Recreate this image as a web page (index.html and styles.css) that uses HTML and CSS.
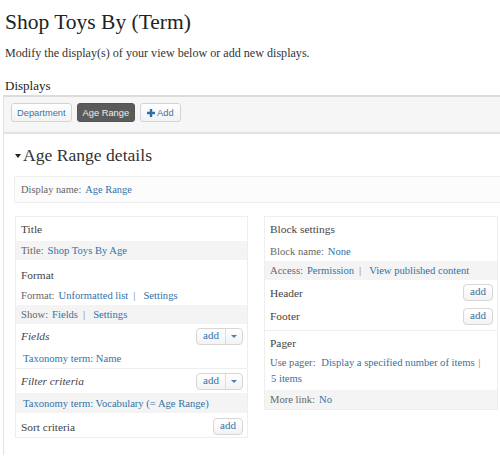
FILE: index.html
```html
<!DOCTYPE html>
<html>
<head>
<meta charset="utf-8">
<link rel="stylesheet" href="styles.css">
</head>
<body>
<h1 class="page-title">Shop Toys By (Term)</h1>
<p class="intro">Modify the display(s) of your view below or add new displays.</p>
<h2 class="section-label">Displays</h2>
<div class="displays">
  <div class="tabs">
    <span class="tab">Department</span>
    <span class="tab active">Age Range</span>
    <span class="tab add"><svg class="plus" viewBox="0 0 10 10" width="8" height="8"><path d="M3.5 0h3v3.5H10v3H6.5V10h-3V6.5H0v-3h3.5z" fill="#2f6fa6"/></svg>Add</span>
  </div>
  <div class="details">
    <h3 class="details-title"><span class="caret"></span>Age Range details</h3>
    <div class="display-name"><span class="label">Display name:</span> <a class="link">Age Range</a></div>
    <div class="columns">
      <div class="col col-left">
        <div class="row head">Title</div>
        <div class="row item grey"><span class="label">Title:</span> <a class="link">Shop Toys By Age</a></div>
        <div class="row head">Format</div>
        <div class="row item"><span class="label">Format:</span> <a class="link">Unformatted list</a> <span class="sep">|</span> <a class="link">Settings</a></div>
        <div class="row item grey"><span class="label">Show:</span> <a class="link">Fields</a> <span class="sep">|</span> <a class="link">Settings</a></div>
        <div class="row head bar"><em>Fields</em><span class="btn"><span class="btn-main">add</span><span class="btn-drop"></span></span></div>
        <div class="row item sub"><a class="link">Taxonomy term: Name</a></div>
        <div class="row head bar"><em>Filter criteria</em><span class="btn"><span class="btn-main">add</span><span class="btn-drop"></span></span></div>
        <div class="row item sub grey"><a class="link">Taxonomy term: Vocabulary (= Age Range)</a></div>
        <div class="row head bar last"><span>Sort criteria</span><span class="btn"><span class="btn-main">add</span></span></div>
      </div>
      <div class="col col-right">
        <div class="row head">Block settings</div>
        <div class="row item"><span class="label">Block name:</span> <a class="link">None</a></div>
        <div class="row item grey"><span class="label">Access:</span> <a class="link">Permission</a> <span class="sep">|</span> <a class="link">View published content</a></div>
        <div class="row head bar"><span>Header</span><span class="btn"><span class="btn-main">add</span></span></div>
        <div class="row head bar"><span>Footer</span><span class="btn"><span class="btn-main">add</span></span></div>
        <div class="row head pager-head">Pager</div>
        <div class="row item pager"><span class="label">Use pager:</span> <a class="link">Display a specified number of items</a> <span class="sep">|</span><br><a class="link items">5 items</a></div>
        <div class="row item grey last"><span class="label">More link:</span> <a class="link">No</a></div>
      </div>
    </div>
  </div>
</div>
</body>
</html>
```
FILE: styles.css
```css
html, body {
  margin: 0;
  padding: 0;
  background: #fff;
  overflow: hidden;
}
body {
  width: 500px;
  height: 458px;
  font-family: "Liberation Serif", "DejaVu Serif", serif;
  color: #333;
}
.page-title {
  margin: 8px 0 0 5px;
  font-size: 21.5px;
  font-weight: normal;
  color: #222;
  line-height: 28px;
}
.intro {
  margin: 9px 0 0 5px;
  font-size: 12.1px;
  line-height: 16px;
  color: #333;
}
.section-label {
  margin: 17px 0 0 5px;
  font-size: 13px;
  font-weight: normal;
  line-height: 16px;
  color: #222;
}
.displays {
  margin: 1px 0 0 3px;
  border-top: 2px solid #dcdcdc;
  border-left: 1px solid #e2e2e2;
  width: 520px;
  height: 358px;
}
.tabs {
  display: flex;
  gap: 5px;
  padding: 6px 0 0 7px;
  box-sizing: border-box;
  height: 37px;
  background: #f6f6f6;
  border-bottom: 2px solid #e2e2e2;
}
.tab {
  display: inline-flex;
  align-items: center;
  height: 19px;
  box-sizing: border-box;
  padding: 0 5px;
  border: 1px solid #d4d4d4;
  border-radius: 3px;
  background: linear-gradient(#ffffff, #f2f2f2);
  font-family: "Liberation Sans", Arial, sans-serif;
  font-size: 9.3px;
  color: #3a76a8;
}
.tab.active {
  background: #5b5b5b;
  border-color: #555;
  color: #eee;
}
.tab.add {
  padding: 0 6px 0 6px;
}
.plus {
  margin-right: 2px;
}
.details {
  padding: 10px 0 0 10px;
}
.details-title {
  margin: 0;
  font-size: 17.6px;
  font-weight: normal;
  line-height: 22px;
  color: #333;
  display: flex;
  align-items: center;
}
.caret {
  width: 0;
  height: 0;
  border-left: 3px solid transparent;
  border-right: 3px solid transparent;
  border-top: 4px solid #222;
  margin: 2px 2px 0 1px;
}
.display-name {
  margin-top: 10px;
  height: 27px;
  box-sizing: border-box;
  padding: 0 6px;
  display: flex;
  align-items: center;
  gap: 4px;
  border: 1px solid #eee;
  background: #fcfcfc;
  font-size: 10.4px;
}
.label {
  color: #666;
}
.link {
  color: #3272a8;
}
.sep {
  color: #777;
  margin: 0 4px 0 1px;
}
.columns {
  display: flex;
  gap: 16px;
  margin-top: 13px;
}
.col {
  border: 1px solid #eee;
  box-sizing: border-box;
  font-size: 10.6px;
}
.col-left {
  width: 233px;
  margin-left: 1px;
}
.col-right {
  width: 234px;
  align-self: flex-start;
}
.row {
  display: flex;
  align-items: center;
  padding: 0 5px;
  gap: 4px;
}
.row.head {
  height: 24px;
  font-size: 11.4px;
  color: #444;
}
.row.item {
  height: 19px;
}
.row.grey {
  background: #f4f4f4;
}
.row.bar {
  justify-content: space-between;
  padding-right: 4px;
}
.row.sub {
  padding-left: 7px;
}
.col-left .row.head:nth-child(3) {
  height: 25px;
  align-items: flex-end;
  padding-bottom: 4px;
  box-sizing: border-box;
}
.col-left .row.item:nth-child(4) {
  height: 20px;
}
.col-left .row.head.bar {
  height: 24px;
}
.col-left .row.sub {
  height: 21px;
}
.col-left .row.sub:nth-child(7) {
  border-bottom: 1px solid #eee;
  height: 20px;
}
.col-left .row.sub.grey {
  height: 20px;
}
.col-left .row.last {
  height: 24px;
  padding-top: 3px;
  box-sizing: border-box;
}
.col-right .row.item:nth-child(2) {
  height: 20px;
}
.col-right .row.head.bar {
  height: 24px;
  padding-top: 1px;
  box-sizing: border-box;
}
.col-right .row.head.bar:nth-child(5) {
  border-bottom: 1px solid #eee;
  height: 27px;
  padding-top: 0;
  padding-bottom: 2px;
}
.pager-head {
  height: 29px;
}
.row.pager {
  display: block;
  height: auto;
  line-height: 16px;
  padding-top: 0;
  padding-bottom: 3px;
}
.row.pager .label {
  margin-right: 3px;
}
.items {
  display: inline-block;
  margin-left: 1px;
}
.btn {
  display: inline-flex;
  align-items: stretch;
  height: 15px;
  border: 1px solid #d6d6d6;
  border-radius: 4px;
  background: linear-gradient(#fff, #f3f3f3);
  font-size: 11px;
  color: #3272a8;
  line-height: 13px;
}
.btn-main {
  padding: 0 6px;
}
.btn-drop {
  width: 16px;
  border-left: 1px solid #ddd;
  position: relative;
}
.btn-drop::after {
  content: "";
  position: absolute;
  left: 5px;
  top: 6px;
  border-left: 3px solid transparent;
  border-right: 3px solid transparent;
  border-top: 3px solid #4a7fb0;
}
```
